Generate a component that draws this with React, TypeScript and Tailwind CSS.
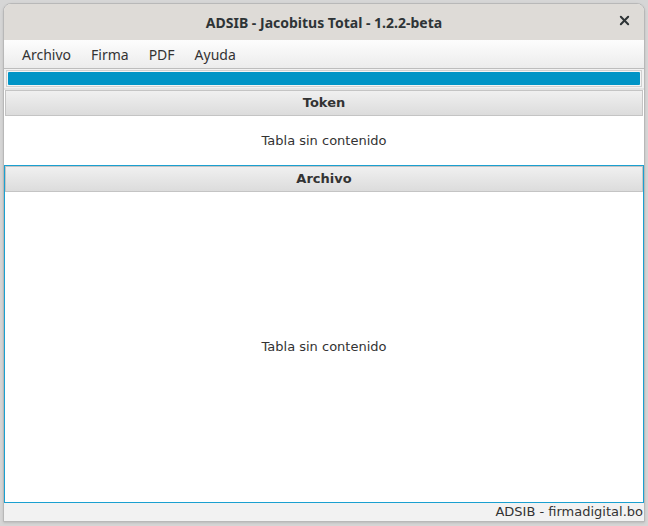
import React from 'react';

const dejavu = { fontFamily: '"DejaVu Sans", sans-serif' };

const TableSection = ({ title, focused, grow }: { title: string; focused?: boolean; grow?: boolean }) => (
  <div
    className={`flex flex-col bg-white ${grow ? 'flex-1' : 'h-[75px]'} ${
      focused ? 'border border-[#1aa0d0]' : 'border-x border-transparent'
    }`}
  >
    <div className="h-[26px] flex items-center justify-center border border-[#c4c4c4] bg-gradient-to-b from-[#f0f0f0] to-[#dcdcdc] text-[13px] font-bold text-[#333]">
      {title}
    </div>
    <div className="flex-1 flex items-center justify-center text-[13px] text-[#333]">Tabla sin contenido</div>
  </div>
);

export default function App() {
  return (
    <div className="w-[648px] h-[526px] bg-[#d6d6d6] pt-[3px] px-[3px] overflow-hidden" style={dejavu}>
      <div className="h-[519px] flex flex-col rounded-t-[8px] overflow-hidden border border-[#b8b8b8] bg-[#f2f2f2] shadow">
        {/* title bar */}
        <div
          className="h-[36px] shrink-0 flex items-center justify-center relative bg-[#dedbd7] text-[14px] font-bold text-[#2e3436]"
          style={{ fontFamily: '"Noto Sans", sans-serif' }}
        >
          ADSIB - Jacobitus Total - 1.2.2-beta
          <span className="absolute right-[14px] top-[11px]">
            <svg width="11" height="11" viewBox="0 0 12 12">
              <path d="M2 2 L10 10 M10 2 L2 10" stroke="#2e3436" strokeWidth="2.2" strokeLinecap="round" />
            </svg>
          </span>
        </div>
        {/* menu */}
        <div
          className="h-[29px] shrink-0 flex items-center gap-[20px] pl-[18px] bg-gradient-to-b from-[#fdfdfd] to-[#ececec] border-b border-[#bdbdbd] text-[14px] text-[#333]"
          style={{ fontFamily: '"Noto Sans", sans-serif' }}
        >
          <span>Archivo</span>
          <span>Firma</span>
          <span>PDF</span>
          <span>Ayuda</span>
        </div>
        {/* progress */}
        <div className="h-[19px] shrink-0 px-[2px] pt-[1px]">
          <div className="h-[17px] border border-[#d0d0d0] bg-[#f4f4f4] p-[1px]">
            <div className="h-full bg-[#0094c6] rounded-[1px]" />
          </div>
        </div>
        <div className="h-[2px] shrink-0 bg-[#e4e4e4]" />
        <TableSection title="Token" />
        <TableSection title="Archivo" focused grow />
        {/* status */}
        <div className="h-[18px] shrink-0 flex items-center justify-end pr-[1px] bg-[#f2f2f2] text-[13px] text-[#333]">
          ADSIB - firmadigital.bo
        </div>
      </div>
    </div>
  );
}
